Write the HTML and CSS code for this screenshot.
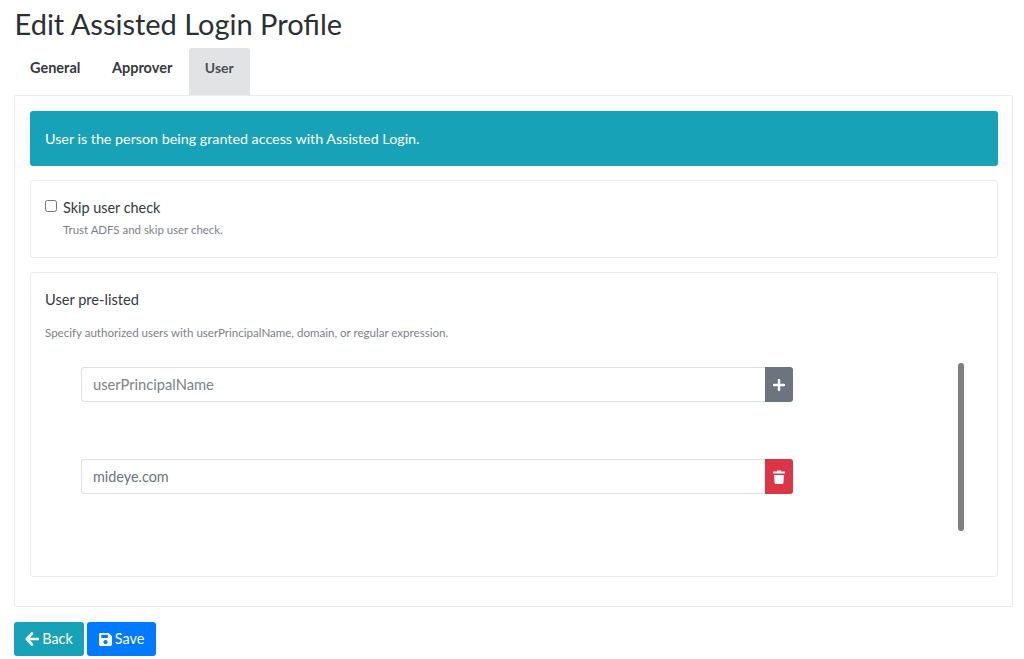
FILE: index.html
```html
<!DOCTYPE html>
<html lang="en">
<head>
    <meta charset="UTF-8">
    <meta name="viewport" content="width=device-width, initial-scale=1.0">
    <title>Edit Assisted Login Profile</title>
    <link rel="stylesheet" href="styles.css">
</head>
<body>
    <h1 class="page-title">Edit Assisted Login Profile</h1>

    <div class="tabs">
        <a class="tab">General</a>
        <a class="tab">Approver</a>
        <a class="tab active">User</a>
    </div>

    <div class="tab-panel">
        <div class="alert">User is the person being granted access with Assisted Login.</div>

        <div class="box box-check">
            <label class="check-label"><input type="checkbox"> Skip user check</label>
            <div class="hint hint-check">Trust ADFS and skip user check.</div>
        </div>

        <div class="box box-list">
            <div class="box-title">User pre-listed</div>
            <div class="hint">Specify authorized users with userPrincipalName, domain, or regular expression.</div>

            <div class="user-list">
                <div class="input-row">
                    <input type="text" class="form-control" placeholder="userPrincipalName">
                    <button class="icon-btn secondary" aria-label="Add">
                        <svg viewBox="0 0 12 12" width="12" height="12"><path d="M6 1v10M1 6h10" stroke="#fff" stroke-width="2.4" stroke-linecap="round"/></svg>
                    </button>
                </div>
                <div class="input-row">
                    <input type="text" class="form-control" value="mideye.com">
                    <button class="icon-btn danger" aria-label="Delete">
                        <svg viewBox="0 0 12 14" width="12" height="14"><path d="M4.2.5h3.6l.5 1H11.500a.5.5 0 0 1 .5.5v1a.5.5 0 0 1-.5.5H.5A.5.5 0 0 1 0 3V2a.5.5 0 0 1 .5-.5h3.200zM1 5h10l-.6 8a1 1 0 0 1-1 1H2.600a1 1 0 0 1-1-1z" fill="#fff"/></svg>
                    </button>
                </div>
                <div class="scroll-thumb"></div>
            </div>
        </div>
    </div>

    <div class="actions">
        <button class="btn info">
            <svg viewBox="0 0 14 14" width="14" height="14"><path d="M7 1.500 1.800 7 7 12.500M2.500 7H13" fill="none" stroke="#fff" stroke-width="2.600" stroke-linecap="round" stroke-linejoin="round"/></svg>
            Back
        </button>
        <button class="btn primary">
            <svg viewBox="0 0 14 14" width="13" height="13"><path fill-rule="evenodd" d="M1.500 0H10.500L14 3.500V12.500A1.500 1.500 0 0 1 12.500 14H1.500A1.500 1.500 0 0 1 0 12.500V1.500A1.500 1.500 0 0 1 1.500 0zM2.500 2v3.500H9.500V2zM7 7.500a2.300 2.300 0 1 0 0 4.600 2.300 2.300 0 0 0 0-4.600z" fill="#fff"/></svg>
            Save
        </button>
    </div>
</body>
</html>
```

FILE: styles.css
```css
body {
    font-family: Lato, "Noto Sans", sans-serif;
    font-size: 14.4px;
    line-height: 1.5;
    color: #343a40;
    margin: 0;
    padding: 0 11px 0 14px;
    background-color: #fff;
}

.page-title {
    font-size: 29px;
    font-weight: 400;
    line-height: 34px;
    margin: 0;
    padding: 7px 0 7px 0.5px;
    color: #2b3035;
}

/* Tabs */
.tabs {
    display: flex;
    height: 47px;
}

.tab {
    padding: 9px 15.5px 0 16px;
    font-size: 14.5px;
    font-weight: 700;
    color: #343a40;
    border-radius: 3px 3px 0 0;
}

.tab.active {
    background-color: #e1e3e5;
    color: #495057;
    font-size: 14px;
    margin-left: 1px;
    padding: 9px 16px 0;
}

.tab-panel {
    border: 1px solid #e9ecef;
    border-radius: 2px;
    padding: 15px 14px 29px 15px;
}

/* Alert */
.alert {
    background-color: #17a2b8;
    color: #fff;
    border-radius: 3px;
    font-size: 14.3px;
    padding: 17px 15px 0;
    height: 55px;
    box-sizing: border-box;
    margin-bottom: 14px;
}

/* Boxes */
.box {
    border: 1px solid #e9ecef;
    border-radius: 3px;
    padding: 0 14px;
    box-sizing: border-box;
}

.box-check {
    height: 78px;
    padding-top: 16px;
    margin-bottom: 14px;
}

.box-list {
    height: 305px;
    padding-top: 16px;
}

.check-label {
    display: flex;
    align-items: center;
    gap: 6px;
    line-height: 22px;
}

.check-label input {
    width: 12px;
    height: 12px;
    margin: 0 0 4px;
}

.hint {
    font-size: 11.55px;
    color: #7b8288;
}

.hint-check {
    font-size: 11.45px;
    margin: 2px 0 0 18px;
}

.box-title {
    font-size: 14.6px;
    line-height: 22px;
    margin-bottom: 13px;
}

/* Pre-listed users */
.user-list {
    position: relative;
    padding: 26px 0 0 36px;
}

.input-row {
    display: flex;
    width: 712px;
    height: 35px;
    margin-bottom: 57px;
}

.form-control {
    flex: 1;
    min-width: 0;
    font-family: inherit;
    font-size: 14.4px;
    color: #6c757d;
    padding: 0 11px;
    border: 1px solid #dee2e6;
    border-right: none;
    border-radius: 3px 0 0 3px;
    outline: none;
}

.form-control::placeholder {
    font-size: 14.7px;
    color: #7b8288;
}

.icon-btn {
    width: 28px;
    border: none;
    border-radius: 0 3px 3px 0;
    padding: 0;
    display: flex;
    align-items: center;
    justify-content: center;
}

.icon-btn.secondary {
    background-color: #6c757d;
}

.icon-btn.danger {
    background-color: #dc3545;
}

.scroll-thumb {
    position: absolute;
    right: 19px;
    top: 22px;
    width: 6px;
    height: 168px;
    border-radius: 3px;
    background-color: #7f7f7f;
}

/* Footer buttons */
.actions {
    display: flex;
    gap: 3px;
    padding-top: 15px;
}

.btn {
    display: flex;
    align-items: center;
    justify-content: center;
    gap: 3px;
    height: 34px;
    padding: 0 0 2px;
    border: none;
    border-radius: 3px;
    color: #fff;
    font-family: inherit;
    font-size: 14.4px;
}

.btn svg {
    margin-top: 2px;
}

.btn.info {
    width: 70px;
    background-color: #17a2b8;
}

.btn.primary {
    width: 69px;
    background-color: #007bff;
}
```
